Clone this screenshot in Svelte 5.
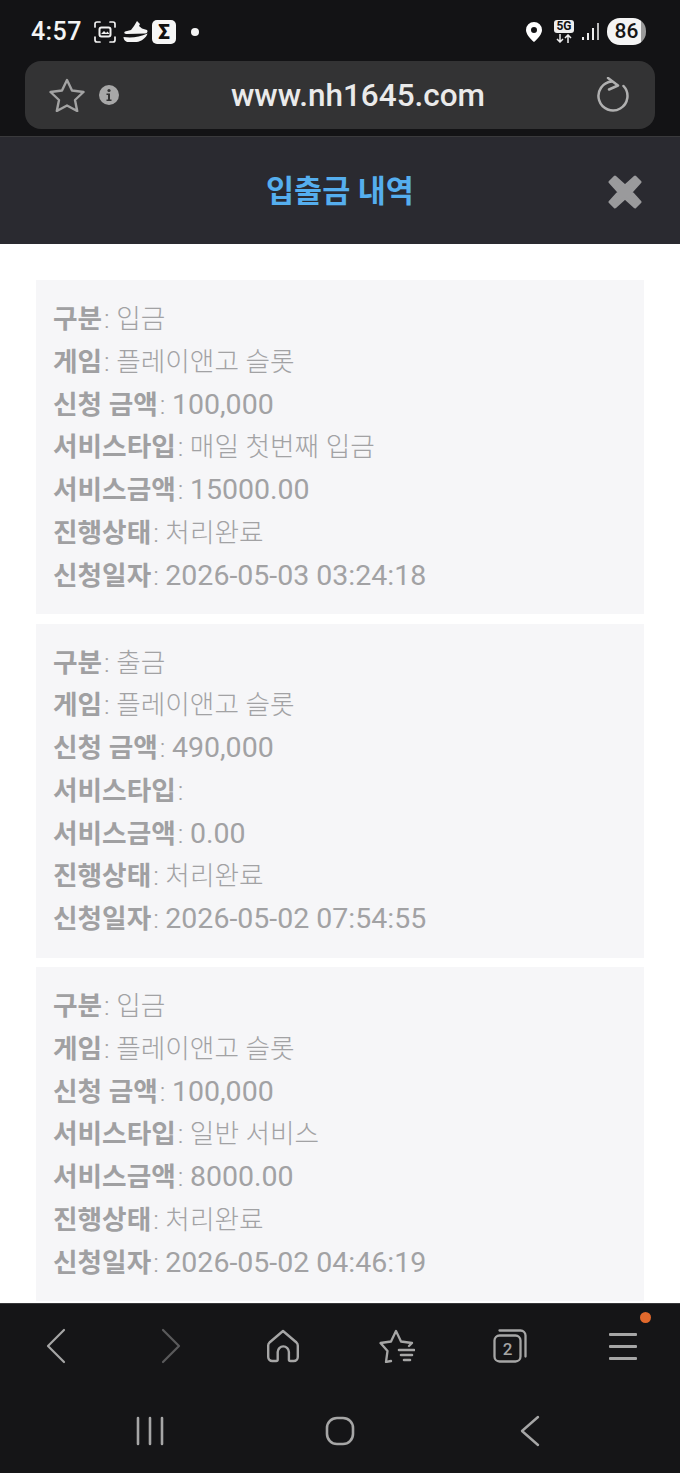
<script>
  const records = [
    { type: "입금", amount: "100,000", service: "매일 첫번째 입금", bonus: "15000.00", date: "2026-05-03 03:24:18" },
    { type: "출금", amount: "490,000", service: "", bonus: "0.00", date: "2026-05-02 07:54:55" },
    { type: "입금", amount: "100,000", service: "일반 서비스", bonus: "8000.00", date: "2026-05-02 04:46:19" }
  ];
</script>

<div class="phone">
  <div class="chrome">
    <div class="status">
      <span class="time">4:57</span>
      <svg class="ic-shot" width="24" height="24" viewBox="0 0 24 24" fill="none" stroke="#f2f2f2" stroke-width="1.7" stroke-linecap="round">
        <path d="M2 7V4a2 2 0 0 1 2-2h3M17 2h3a2 2 0 0 1 2 2v3M22 17v3a2 2 0 0 1-2 2h-3M7 22H4a2 2 0 0 1-2-2v-3" />
        <rect x="6.5" y="7.5" width="11" height="9" rx="2" stroke-width="2" />
        <path d="M8 14l3-3 2 2 1.500-1.500 2 2.500z" fill="#f2f2f2" stroke="none" />
      </svg>
      <svg class="ic-ski" width="25" height="22" viewBox="0 0 25 22" fill="#f4f4f4">
        <path d="M14 0l3 3-1 2 3 2.500 5 1.500c1 1 .5 3-1.500 3.500L4 13C1.500 13 .5 12 2 10.500l6-1.500 3-4z" />
        <path d="M.5 16c7 1 16 .5 24-3.500-1 4-6 8-11 8.500H5c-2.500 0-4.500-2.500-4.500-5z" />
      </svg>
      <span class="sigma">Σ</span>
      <span class="dot"></span>
      <span class="grow"></span>
      <svg class="ic-pin" width="16" height="20" viewBox="0 0 16 20">
        <path fill-rule="evenodd" fill="#fff" d="M8 0a8 8 0 0 1 8 8c0 4-4 8.500-8 12-4-3.500-8-8-8-12a8 8 0 0 1 8-8zm0 5a3 3 0 1 0 0 6 3 3 0 0 0 0-6z" />
      </svg>
      <div class="net">
        <span class="fiveg">5G</span>
        <svg width="16" height="9" viewBox="0 0 16 9" fill="none" stroke="#eee" stroke-width="1.500">
          <path d="M4 0v8M1 5l3 3 3-3M12 9V1M9 4l3-3 3 3" />
        </svg>
      </div>
      <svg class="ic-signal" width="18" height="18" viewBox="0 0 18 18" fill="#eee">
        <rect x="0" y="14" width="2" height="3" />
        <rect x="5" y="10" width="2" height="7" />
        <rect x="10" y="5" width="2" height="12" />
        <rect x="15" y="0" width="2" height="17" fill="#bbb" />
      </svg>
      <span class="battery">86</span>
    </div>

    <div class="urlbar">
      <svg class="ic-star" width="36" height="34" viewBox="0 0 36 34" fill="none" stroke="#a3a3a3" stroke-width="2.400" stroke-linejoin="round">
        <path d="M18 2l5 10.500 11.500 1.500-8.500 8 2.200 11L18 27.500 7.800 33 10 22l-8.500-8L13 12.500z" />
      </svg>
      <svg class="ic-info" width="20" height="20" viewBox="0 0 20 20">
        <circle cx="10" cy="10" r="10" fill="#a8a8a8" />
        <circle cx="10" cy="5.500" r="1.600" fill="#333" />
        <path d="M7.500 8.500H11v6h1.500v1.500h-5v-1.500H9V10H7.500z" fill="#333" />
      </svg>
      <span class="url">www.nh1645.com</span>
      <svg class="ic-reload" width="32" height="36" viewBox="0 0 32 36" fill="none" stroke="#b0b0b0" stroke-width="2.500" stroke-linecap="round" stroke-linejoin="round">
        <path d="M15 4.500A14.500 14.500 0 1 0 26.500 9" />
        <path d="M11 1l10 7.500-9 4" />
      </svg>
    </div>
  </div>

  <header class="head">
    <h1>입출금 내역</h1>
    <svg class="close" width="34" height="34" viewBox="0 0 34 34">
      <path fill="#9a9a9c" stroke="#9a9a9c" stroke-width="3" stroke-linejoin="round" d="M7 2l10 9 10-9 5 5-9 10 9 10-5 5-10-9-10 9-5-5 9-10-9-10z" />
    </svg>
  </header>

  <main class="list">
    {#each records as r}
      <div class="card">
        <p><b>구분</b>: {r.type}</p>
        <p><b>게임</b>: 플레이앤고 슬롯</p>
        <p><b>신청 금액</b>: <span class="num">{r.amount}</span></p>
        <p><b>서비스타입</b>: {r.service}</p>
        <p><b>서비스금액</b>: <span class="num">{r.bonus}</span></p>
        <p><b>진행상태</b>: 처리완료</p>
        <p><b>신청일자</b>: <span class="num">{r.date}</span></p>
      </div>
    {/each}
  </main>

  <footer class="foot">
    <nav class="tools">
      <svg width="24" height="36" viewBox="0 0 24 36" fill="none" stroke="#a6a6a6" stroke-width="2.200" stroke-linecap="round" stroke-linejoin="round">
        <path d="M19 2L3 18l16 16" />
      </svg>
      <svg width="24" height="36" viewBox="0 0 24 36" fill="none" stroke="#5a5a5c" stroke-width="2.200" stroke-linecap="round" stroke-linejoin="round">
        <path d="M5 2l16 16L5 34" />
      </svg>
      <svg width="32" height="34" viewBox="0 0 32 34" fill="none" stroke="#a6a6a6" stroke-width="2.400" stroke-linejoin="round">
        <path d="M16 2L2.500 13.500c-1 1-1.300 2-1.300 3V28a4 4 0 0 0 4 4h4a1.500 1.500 0 0 0 1.500-1.500V23a5.600 5.600 0 0 1 11.200 0v7.500a1.500 1.500 0 0 0 1.500 1.500h3.400a4 4 0 0 0 4-4V16.500c0-1-.3-2-1.300-3z" />
      </svg>
      <svg width="36" height="34" viewBox="0 0 36 34" fill="none" stroke="#a6a6a6" stroke-width="2.300" stroke-linecap="round" stroke-linejoin="round">
        <path d="M12 32l-5 1 1.500-11L1.500 14 12 12.500 17 2l5 10.500 11 1.500-3 3" />
        <path d="M20 21h15M22 26h11M25 31h6" stroke-width="2.600" />
      </svg>
      <svg width="34" height="34" viewBox="0 0 34 34" fill="none" stroke="#a6a6a6" stroke-width="2.300" stroke-linejoin="round">
        <rect x="1.500" y="6.500" width="26" height="26" rx="5" />
        <path d="M6.500 1.500h21a5 5 0 0 1 5 5v21" stroke-linecap="round" />
        <text x="14.500" y="26" text-anchor="middle" class="tabcount">2</text>
      </svg>
      <div class="menu">
        <span></span><span></span><span></span>
        <i></i>
      </div>
    </nav>
    <nav class="sys">
      <svg width="28" height="30" viewBox="0 0 28 30" fill="none" stroke="#a6a6a6" stroke-width="2.600" stroke-linecap="round">
        <path d="M2 2v26M14 2v26M26 2v26" />
      </svg>
      <svg width="30" height="30" viewBox="0 0 30 30" fill="none" stroke="#a6a6a6" stroke-width="2.600">
        <rect x="2" y="2" width="26" height="26" rx="10" />
      </svg>
      <svg width="22" height="32" viewBox="0 0 22 32" fill="none" stroke="#a6a6a6" stroke-width="2.400" stroke-linecap="round" stroke-linejoin="round">
        <path d="M19 2L3 16l16 14" />
      </svg>
    </nav>
  </footer>
</div>

<style>
  :global(body) {
    margin: 0;
    background: #fff;
  }
  .phone {
    width: 680px;
    height: 1473px;
    display: flex;
    flex-direction: column;
    overflow: hidden;
    font-family: Roboto, "Noto Sans CJK KR", sans-serif;
  }
  .chrome {
    height: 136px;
    background: #131315;
    border-bottom: 1px solid #3a3a3c;
    box-sizing: content-box;
  }
  .status {
    height: 61px;
    box-sizing: border-box;
    padding: 2px 34px 0 31px;
    display: flex;
    align-items: center;
    color: #f4f4f4;
  }
  .time {
    font-size: 25px;
    font-weight: 500;
    letter-spacing: 0.4px;
    margin-right: 11px;
  }
  .ic-ski {
    margin-left: 6px;
  }
  .sigma {
    width: 24px;
    height: 24px;
    margin-left: 4px;
    background: #f6f6f6;
    color: #111;
    border-radius: 5px;
    font-size: 21px;
    font-weight: 900;
    line-height: 24px;
    text-align: center;
  }
  .dot {
    width: 8px;
    height: 8px;
    border-radius: 50%;
    background: #f4f4f4;
    margin-left: 15px;
  }
  .grow {
    flex: 1;
  }
  .net {
    width: 20px;
    margin-left: 12px;
    display: flex;
    flex-direction: column;
    align-items: center;
    gap: 1px;
  }
  .fiveg {
    width: 20px;
    height: 13px;
    background: #eee;
    color: #111;
    border-radius: 3px;
    font-size: 12px;
    font-weight: 700;
    line-height: 13px;
    text-align: center;
  }
  .ic-signal {
    margin-left: 8px;
  }
  .battery {
    width: 39px;
    height: 27px;
    margin-left: 7px;
    background: linear-gradient(90deg, #f4f4f4 86%, #9a9a9a 86%);
    color: #161616;
    border-radius: 13px;
    font-size: 21px;
    font-weight: 500;
    line-height: 27px;
    text-align: center;
  }
  .urlbar {
    position: relative;
    height: 68px;
    margin: 0 25px;
    padding: 0 26px 0 24px;
    background: #333334;
    border-radius: 16px;
    display: flex;
    align-items: center;
    color: #eaeaea;
  }
  .ic-info {
    margin-left: 14px;
  }
  .url {
    flex: 1;
    text-align: center;
    font-size: 31.500px;
    font-weight: 500;
  }
  .head {
    position: relative;
    height: 107px;
    flex: none;
    background: #2a2a30;
    display: flex;
    align-items: center;
    justify-content: center;
  }
  h1 {
    margin: 0 0 3px;
    font-size: 30.500px;
    font-weight: 700;
    color: #55aeee;
  }
  .close {
    position: absolute;
    right: 38px;
    top: 38px;
  }
  .list {
    flex: 1;
    min-height: 0;
    overflow: hidden;
    padding: 36px 36px 0;
    display: flex;
    flex-direction: column;
    gap: 9.500px;
  }
  .card {
    height: 334px;
    flex: none;
    box-sizing: border-box;
    padding: 18px 17px 0;
    background: #f6f6f8;
  }
  p {
    margin: 0;
    font-size: 26.700px;
    font-weight: 300;
    line-height: 42.800px;
    color: #a2a2a4;
    white-space: nowrap;
  }
  b {
    font-weight: 700;
    color: #a0a0a2;
    margin-right: 2px;
  }
  .num {
    font-size: 28.500px;
    font-weight: 400;
  }
  .foot {
    height: 170px;
    flex: none;
    background: #151517;
    border-top: 1px solid #38383a;
    box-sizing: border-box;
  }
  .tools {
    height: 84px;
    display: grid;
    grid-template-columns: repeat(6, 1fr);
    justify-items: center;
    align-items: center;
  }
  .tabcount {
    font-size: 17px;
    font-weight: 500;
    fill: #a6a6a6;
    stroke: none;
    font-family: Roboto, sans-serif;
  }
  .menu {
    position: relative;
    width: 28px;
    display: flex;
    flex-direction: column;
    gap: 9px;
  }
  .menu span {
    height: 3px;
    background: #a6a6a6;
    border-radius: 1px;
  }
  .menu i {
    position: absolute;
    right: -14px;
    top: -21px;
    width: 11px;
    height: 11px;
    border-radius: 50%;
    background: #e2692c;
  }
  .sys {
    display: grid;
    grid-template-columns: repeat(3, 1fr);
    justify-items: center;
    align-items: center;
    padding: 0 55px;
    height: 85px;
  }
</style>
